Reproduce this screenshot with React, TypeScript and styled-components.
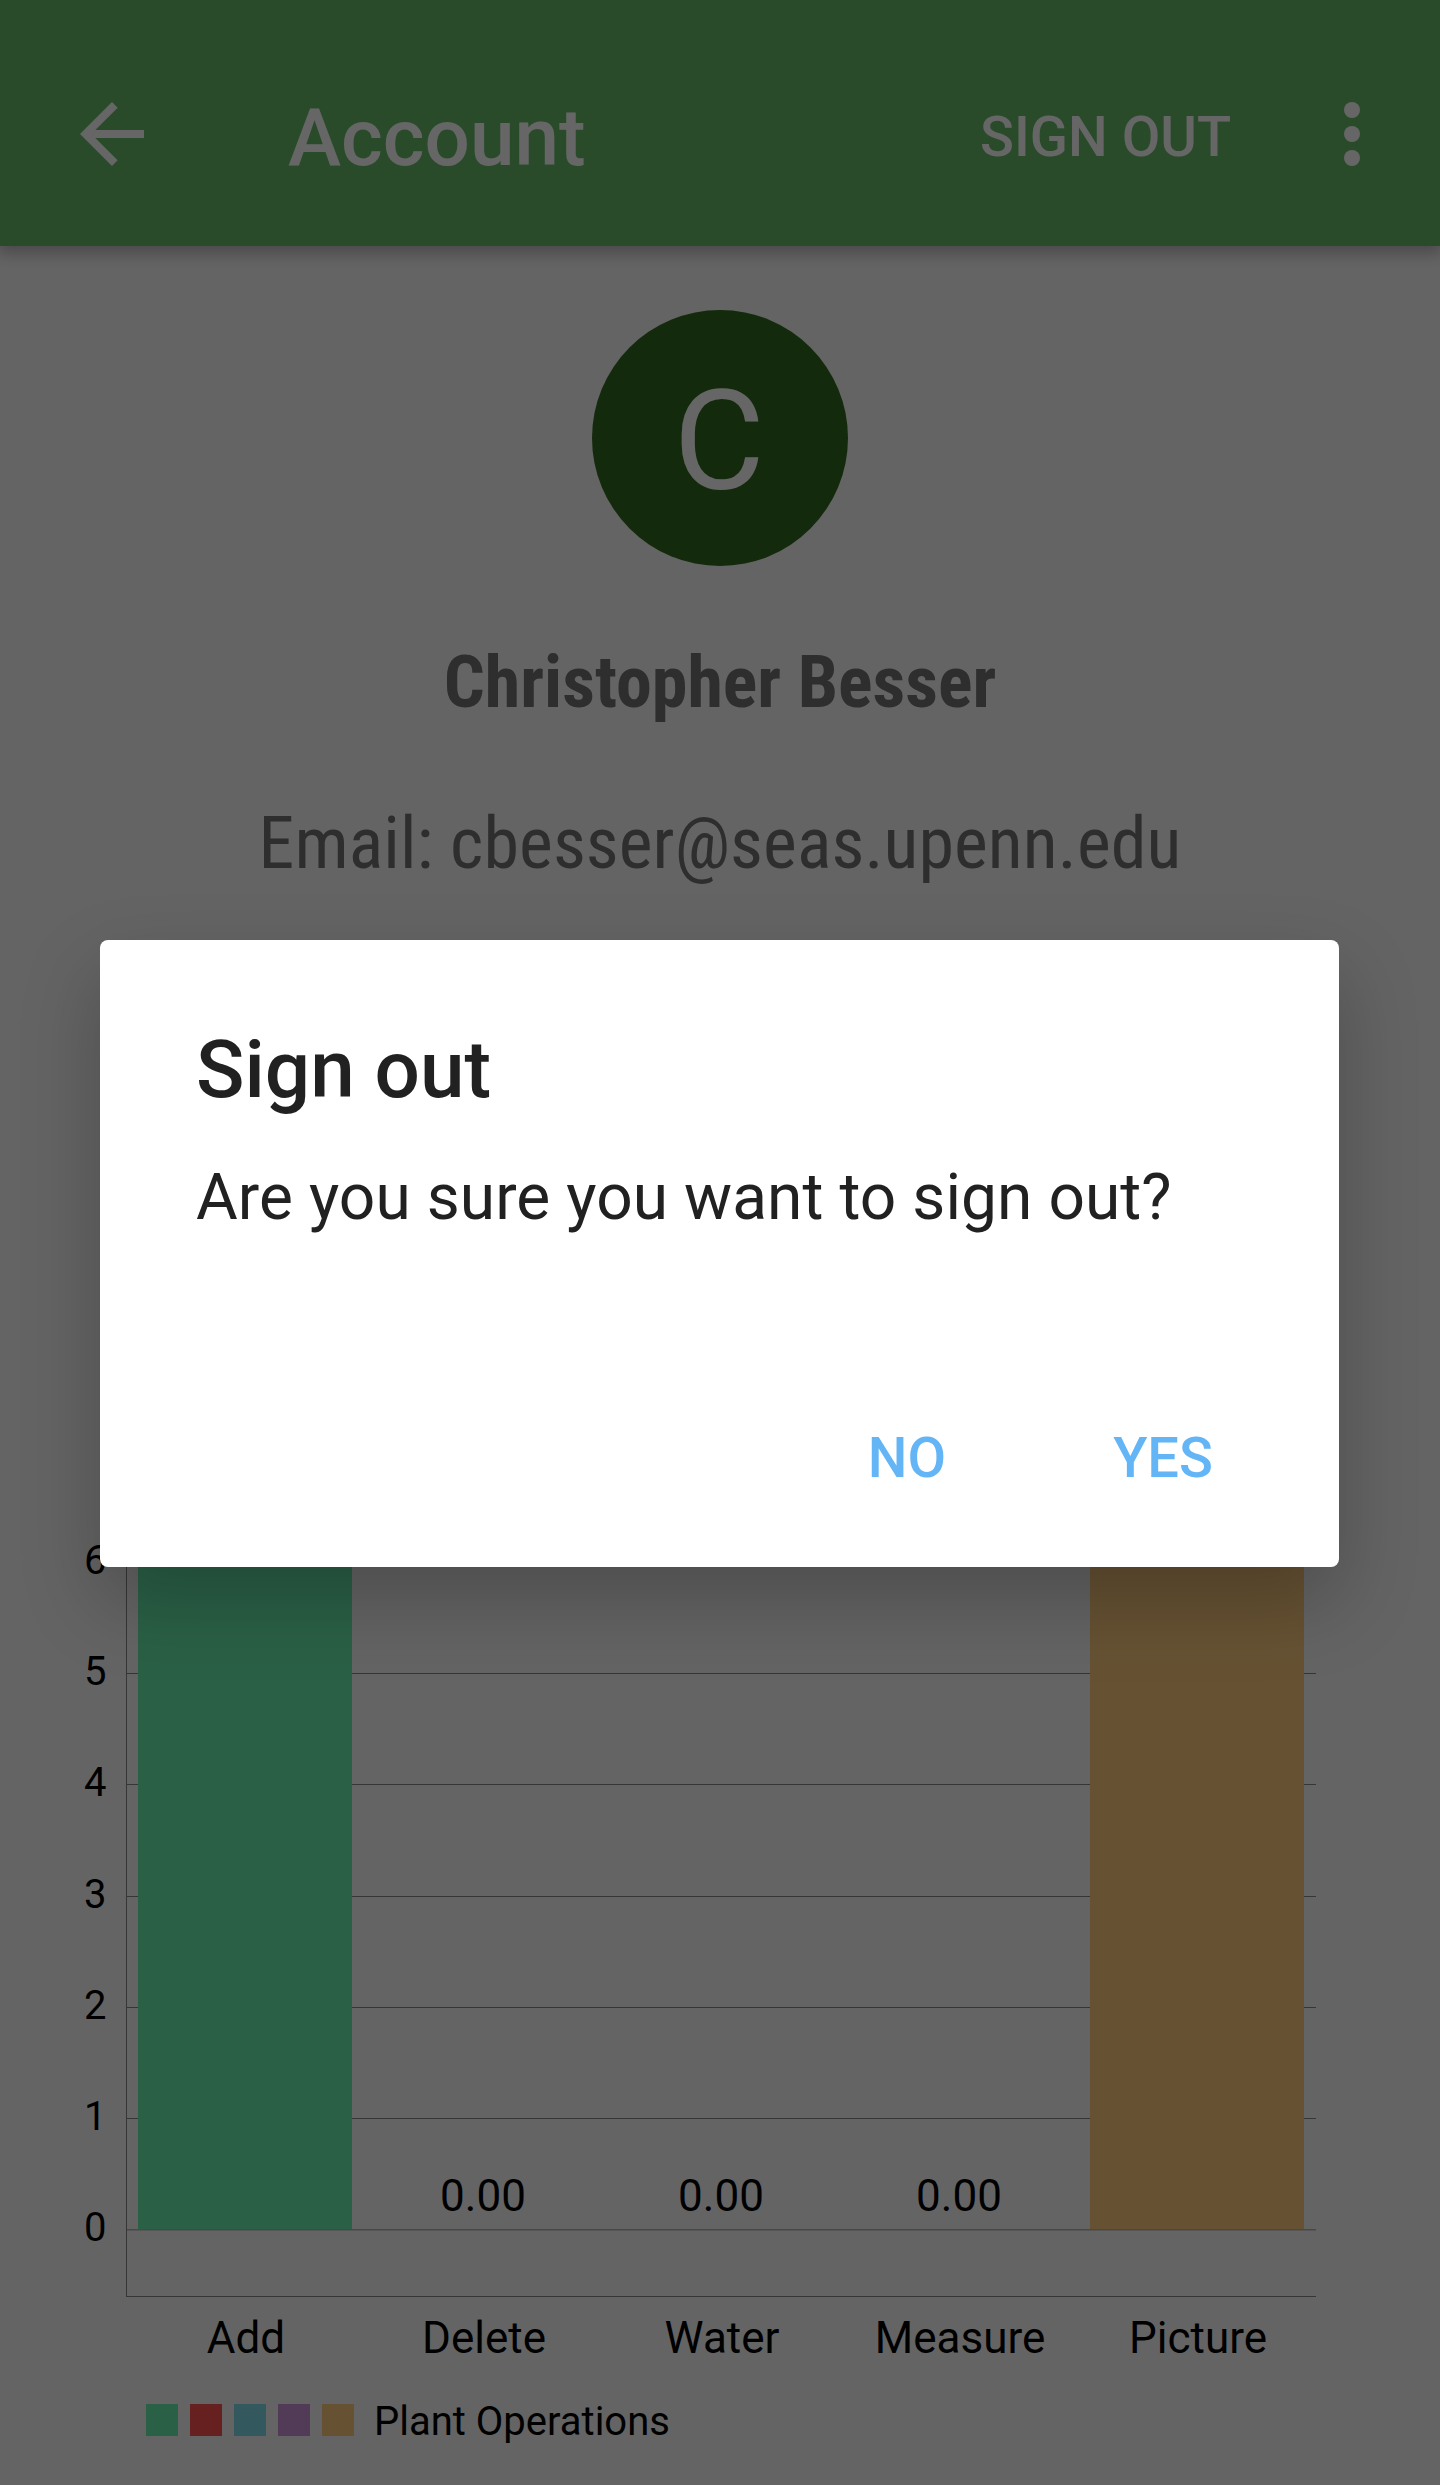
import React from "react";
import styled, { createGlobalStyle } from "styled-components";

const UNIT = 111.2;

const GlobalStyle = createGlobalStyle`
  *, *::before, *::after { box-sizing: border-box; }
  body {
    margin: 0;
    background: #fafafa;
    font-family: Roboto, "Noto Sans", sans-serif;
  }
  button {
    border: 0;
    padding: 0;
    background: none;
    font-family: inherit;
  }
`;

const Screen = styled.div`
  position: relative;
  width: 1440px;
  height: 2485px;
  overflow: hidden;
  background: #fafafa;
`;

const Page = styled.div`
  display: flex;
  flex-direction: column;
  height: 100%;
`;

const AppBar = styled.header`
  display: flex;
  align-items: center;
  flex: none;
  height: 246px;
  padding: 22px 40px 0 64px;
  background: #66bb6a;
  color: #fff;
  box-shadow: 0 3px 16px 3px rgba(0, 0, 0, 0.3);
`;

const IconButton = styled.button`
  display: flex;
  width: 96px;
  height: 96px;
  color: inherit;
`;

const Icon = styled.svg`
  width: 96px;
  height: 96px;
  fill: currentColor;
`;

const AppTitle = styled.h1`
  flex: 1;
  margin: 8px 0 0 128px;
  font-size: 80px;
  font-weight: 500;
  line-height: 94px;
`;

const BarAction = styled.button`
  margin: 6px 73px 0 0;
  color: inherit;
  font-size: 56px;
  font-weight: 500;
  line-height: 66px;
  white-space: nowrap;
`;

const Profile = styled.section`
  display: flex;
  flex-direction: column;
  align-items: center;
  padding-top: 64px;
  color: #737373;
`;

const Avatar = styled.div`
  display: flex;
  align-items: center;
  justify-content: center;
  width: 256px;
  height: 256px;
  padding: 6px 2px 0 0;
  border-radius: 50%;
  background: #33691e;
  color: #fff;
  font-size: 140px;
  line-height: 164px;
`;

const ProfileLine = styled.p<{ $bold?: boolean; $gap: number }>`
  margin: ${(p) => p.$gap}px 0 0;
  font-family: "Roboto Condensed", Roboto, sans-serif;
  font-size: 72px;
  font-weight: ${(p) => (p.$bold ? 700 : 400)};
  line-height: 85px;
  letter-spacing: ${(p) => (p.$bold ? "0" : "0.1px")};
  white-space: nowrap;
`;

const Chart = styled.section`
  margin-top: auto;
  padding-bottom: 40px;
  color: #000;
`;

const ChartBody = styled.div`
  display: flex;
  height: 760px;
`;

const TickColumn = styled.div`
  display: flex;
  flex-direction: column;
  flex: none;
  width: 126px;
  padding-right: 19.5px;
  text-align: right;
`;

const Tick = styled.span`
  flex: none;
  height: ${UNIT}px;
  font-size: 40px;
  line-height: 47px;
`;

const Plot = styled.div`
  display: grid;
  width: 1190px;
  height: 735px;
  margin-top: 25px;
`;

const GridLines = styled.div`
  grid-area: 1 / 1;
  display: flex;
  flex-direction: column;
  overflow: hidden;
  border: solid #888;
  border-width: 0 0 1px 1px;
`;

const GridRow = styled.div`
  flex: none;
  height: ${UNIT}px;
  border-top: 1px solid #888;
`;

const ZeroLine = styled.div`
  flex: none;
  height: 2px;
  border-top: 1px solid #b4b4b4;
  background: #d8d8d8;
`;

const Columns = styled.div`
  grid-area: 1 / 1;
  display: grid;
  grid-template-columns: repeat(5, 238px);
  height: 667px;
`;

const Column = styled.div`
  display: flex;
  flex-direction: column;
  justify-content: flex-end;
  padding: 0 12px;
`;

const Bar = styled.div<{ $units: number; $color: string }>`
  height: ${(p) => p.$units * UNIT}px;
  max-height: 100%;
  background: ${(p) => p.$color};
`;

const BarValue = styled.span`
  margin-bottom: 7px;
  font-size: 44px;
  line-height: 52px;
  text-align: center;
`;

const Categories = styled.div`
  display: grid;
  grid-template-columns: repeat(5, 238px);
  padding: 15px 0 0 127px;
`;

const Category = styled.span`
  font-size: 44px;
  line-height: 52px;
  text-align: center;
`;

const Legend = styled.div`
  display: flex;
  gap: 12px;
  margin-top: 34px;
  padding-left: 146px;
`;

const Swatch = styled.span<{ $color: string }>`
  width: 32px;
  height: 32px;
  margin-top: 6px;
  background: ${(p) => p.$color};
`;

const LegendLabel = styled.span`
  margin-left: 8px;
  font-size: 40px;
  line-height: 47px;
`;

const Scrim = styled.div`
  position: absolute;
  inset: 0;
  display: flex;
  align-items: center;
  padding: 22px 101px 0 100px;
  background: rgba(0, 0, 0, 0.6);
`;

const Dialog = styled.div`
  display: flex;
  flex-direction: column;
  width: 100%;
  height: 627px;
  padding: 83px 48px 37px 96px;
  border-radius: 8px;
  background: #fff;
  color: #212121;
  box-shadow: 0 34px 80px rgba(0, 0, 0, 0.23);
`;

const DialogTitle = styled.h2`
  margin: 0;
  font-size: 80px;
  font-weight: 500;
  line-height: 94px;
`;

const DialogText = styled.p`
  margin: 43px 0 0;
  font-size: 64px;
  line-height: 75px;
  letter-spacing: 0.07px;
  white-space: nowrap;
`;

const DialogActions = styled.div`
  display: flex;
  justify-content: flex-end;
  margin-top: auto;
`;

const DialogButton = styled.button`
  width: 256px;
  height: 144px;
  color: #64b5f6;
  font-size: 56px;
  font-weight: 500;
  line-height: 66px;
`;

const operations = [
  { name: "Add", value: 6, color: "#69f0ae" },
  { name: "Delete", value: 0, color: "#ff5252" },
  { name: "Water", value: 0, color: "#80deea" },
  { name: "Measure", value: 0, color: "#ce93d8" },
  { name: "Picture", value: 6, color: "#ffcc80" },
];

const ticks = [6, 5, 4, 3, 2, 1, 0];

export default function App() {
  return (
    <Screen>
      <GlobalStyle />
      <Page>
        <AppBar>
          <IconButton aria-label="Back">
            <Icon viewBox="0 0 24 24">
              <path d="M20 11H7.83l5.59-5.59L12 4l-8 8 8 8 1.41-1.41L7.83 13H20v-2z" />
            </Icon>
          </IconButton>
          <AppTitle>Account</AppTitle>
          <BarAction>SIGN OUT</BarAction>
          <IconButton aria-label="More options">
            <Icon viewBox="0 0 24 24">
              <circle cx="12" cy="6" r="2" />
              <circle cx="12" cy="12" r="2" />
              <circle cx="12" cy="18" r="2" />
            </Icon>
          </IconButton>
        </AppBar>

        <Profile>
          <Avatar>C</Avatar>
          <ProfileLine $bold $gap={74}>Christopher Besser</ProfileLine>
          <ProfileLine $gap={76}>Email: cbesser@seas.upenn.edu</ProfileLine>
        </Profile>

        <Chart>
          <ChartBody>
            <TickColumn>
              {ticks.map((t) => (
                <Tick key={t}>{t}</Tick>
              ))}
            </TickColumn>
            <Plot>
              <GridLines>
                {ticks.slice(0, -1).map((t) => (
                  <GridRow key={t} />
                ))}
                <ZeroLine />
              </GridLines>
              <Columns>
                {operations.map((op) => (
                  <Column key={op.name}>
                    {op.value === 0 ? (
                      <BarValue>{op.value.toFixed(2)}</BarValue>
                    ) : (
                      <Bar $units={op.value} $color={op.color} />
                    )}
                  </Column>
                ))}
              </Columns>
            </Plot>
          </ChartBody>
          <Categories>
            {operations.map((op) => (
              <Category key={op.name}>{op.name}</Category>
            ))}
          </Categories>
          <Legend>
            {operations.map((op) => (
              <Swatch key={op.name} $color={op.color} />
            ))}
            <LegendLabel>Plant Operations</LegendLabel>
          </Legend>
        </Chart>
      </Page>

      <Scrim>
        <Dialog role="dialog" aria-modal="true">
          <DialogTitle>Sign out</DialogTitle>
          <DialogText>Are you sure you want to sign out?</DialogText>
          <DialogActions>
            <DialogButton>NO</DialogButton>
            <DialogButton>YES</DialogButton>
          </DialogActions>
        </Dialog>
      </Scrim>
    </Screen>
  );
}
